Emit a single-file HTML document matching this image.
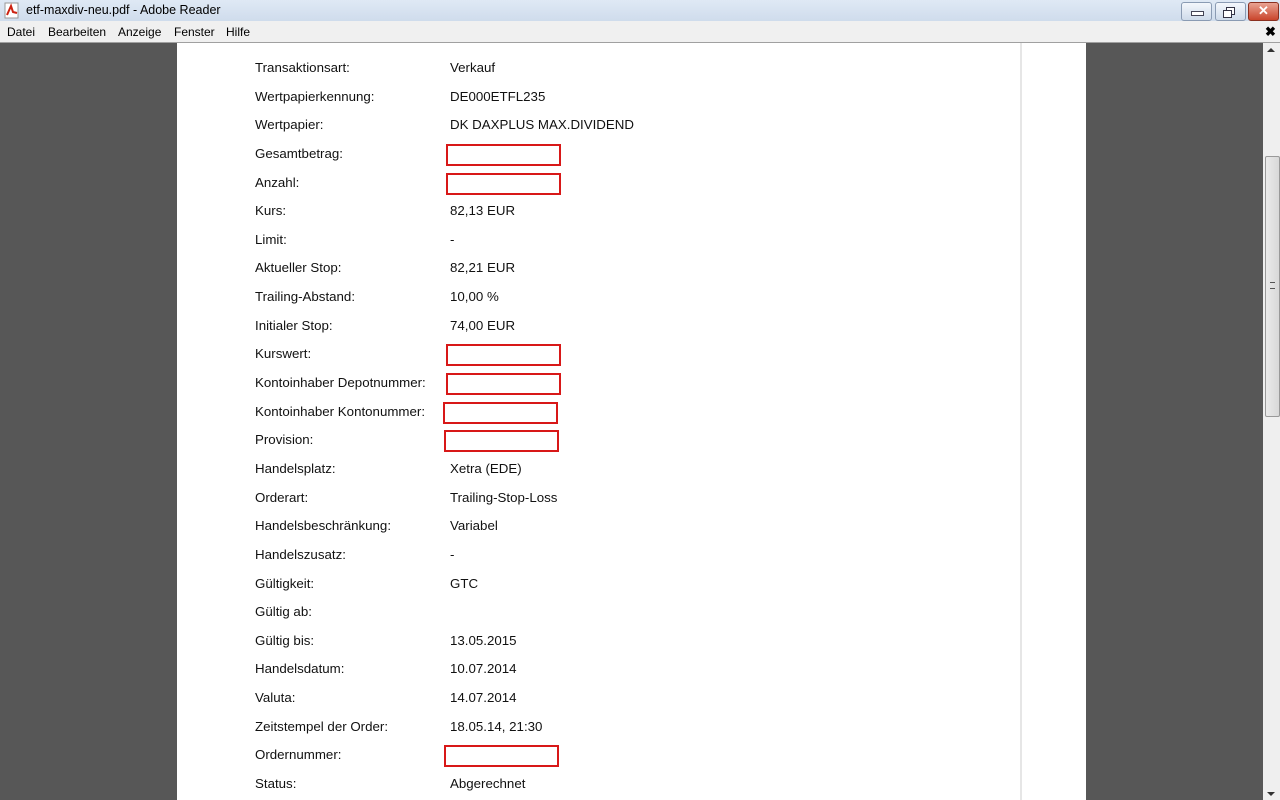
<!DOCTYPE html>
<html><head><style>
body{margin:0;width:1280px;height:800px;overflow:hidden;background:#575757;font-family:"Liberation Sans",Arial,sans-serif;position:relative}
.t{position:absolute;left:0;top:0;width:1280px;height:21px;background:linear-gradient(#dfe9f5,#cfdcec);font-size:12.5px;color:#000}
.m{position:absolute;left:0;top:21px;width:1280px;height:21px;background:#f0f0f0;border-bottom:1px solid #a0a0a0;font-size:12px}
.m span{position:absolute;top:4px}
.pg{position:absolute;left:177px;top:43px;width:909px;height:757px;background:#fff}
.vl{position:absolute;left:1020px;top:43px;width:2px;height:757px;background:#e6e6e6}
.r{position:absolute;font-size:13.3px;color:#111;line-height:16px}
.b{position:absolute;border:2px solid #d81818;width:111px;height:18px}
.sb{position:absolute;left:1263px;top:43px;width:17px;height:757px;background:#efefef}
.btn{position:absolute;top:2px;height:17px;border:1px solid #8a9bb3;border-radius:3px;background:linear-gradient(#f3f7fc,#cfdbea)}
</style></head><body>
<div class="t">
<svg style="position:absolute;left:4px;top:2px" width="16" height="17"><rect x="1" y="1" width="13" height="15" fill="#fff" stroke="#999"/><path d="M3 13 L7 4 L9 10 L13 11" stroke="#c21" stroke-width="2" fill="none"/></svg>
<span style="position:absolute;left:26px;top:3px">etf-maxdiv-neu.pdf - Adobe Reader</span>
<div class="btn" style="left:1181px;width:29px"><div style="position:absolute;left:9px;top:8px;width:11px;height:3px;background:#fff;border:1px solid #445"></div></div>
<div class="btn" style="left:1215px;width:29px"><div style="position:absolute;left:10px;top:4px;width:7px;height:6px;border:1px solid #334;background:#fff"></div><div style="position:absolute;left:7px;top:7px;width:7px;height:6px;border:1px solid #334;background:#fff"></div></div>
<div class="btn" style="left:1248px;width:29px;background:linear-gradient(#e9a392,#c9452c);border-color:#8a3020;color:#fff;font-weight:bold;text-align:center;font-size:13px;line-height:16px">✕</div>
</div>
<div class="m"><span style="left:7px">Datei</span><span style="left:48px">Bearbeiten</span><span style="left:118px">Anzeige</span><span style="left:174px">Fenster</span><span style="left:226px">Hilfe</span><span style="left:1265px;font-weight:bold;font-size:13px;top:3px">✖</span></div>
<div class="pg"></div><div class="vl"></div>
<div class="sb"><div style="position:absolute;left:2px;top:113px;width:13px;height:259px;border:1px solid #999;border-radius:2px;background:linear-gradient(90deg,#eaeaea,#d8d8d8)"><div style="position:absolute;left:4px;top:125px;width:5px;height:5px;border-top:1px solid #555;border-bottom:1px solid #555"></div></div>
<div style="position:absolute;left:4px;top:5px;border:4px solid transparent;border-bottom:4px solid #333;border-top:0"></div>
<div style="position:absolute;left:4px;top:749px;border:4px solid transparent;border-top:4px solid #333;border-bottom:0"></div></div>
<div id="c"></div>
<script>
var rows=[["Transaktionsart:","Verkauf"],["Wertpapierkennung:","DE000ETFL235"],["Wertpapier:","DK DAXPLUS MAX.DIVIDEND"],["Gesamtbetrag:",1],["Anzahl:",1],["Kurs:","82,13 EUR"],["Limit:","-"],["Aktueller Stop:","82,21 EUR"],["Trailing-Abstand:","10,00 %"],["Initialer Stop:","74,00 EUR"],["Kurswert:",1],["Kontoinhaber Depotnummer:",1],["Kontoinhaber Kontonummer:",2],["Provision:",3],["Handelsplatz:","Xetra (EDE)"],["Orderart:","Trailing-Stop-Loss"],["Handelsbeschränkung:","Variabel"],["Handelszusatz:","-"],["Gültigkeit:","GTC"],["Gültig ab:",""],["Gültig bis:","13.05.2015"],["Handelsdatum:","10.07.2014"],["Valuta:","14.07.2014"],["Zeitstempel der Order:","18.05.14, 21:30"],["Ordernummer:",3],["Status:","Abgerechnet"]];
var h="";rows.forEach(function(r,i){var y=67+i*28.64;h+='<div class="r" style="left:255px;top:'+(y-7)+'px">'+r[0]+'</div>';
if(typeof r[1]=="string")h+='<div class="r" style="left:450px;top:'+(y-7)+'px">'+r[1]+'</div>';
else{var x=r[1]==2?443:(r[1]==3?444:446);h+='<div class="b" style="left:'+x+'px;top:'+(y-9)+'px"></div>';}});
document.getElementById("c").innerHTML=h;
</script>
</body></html>
